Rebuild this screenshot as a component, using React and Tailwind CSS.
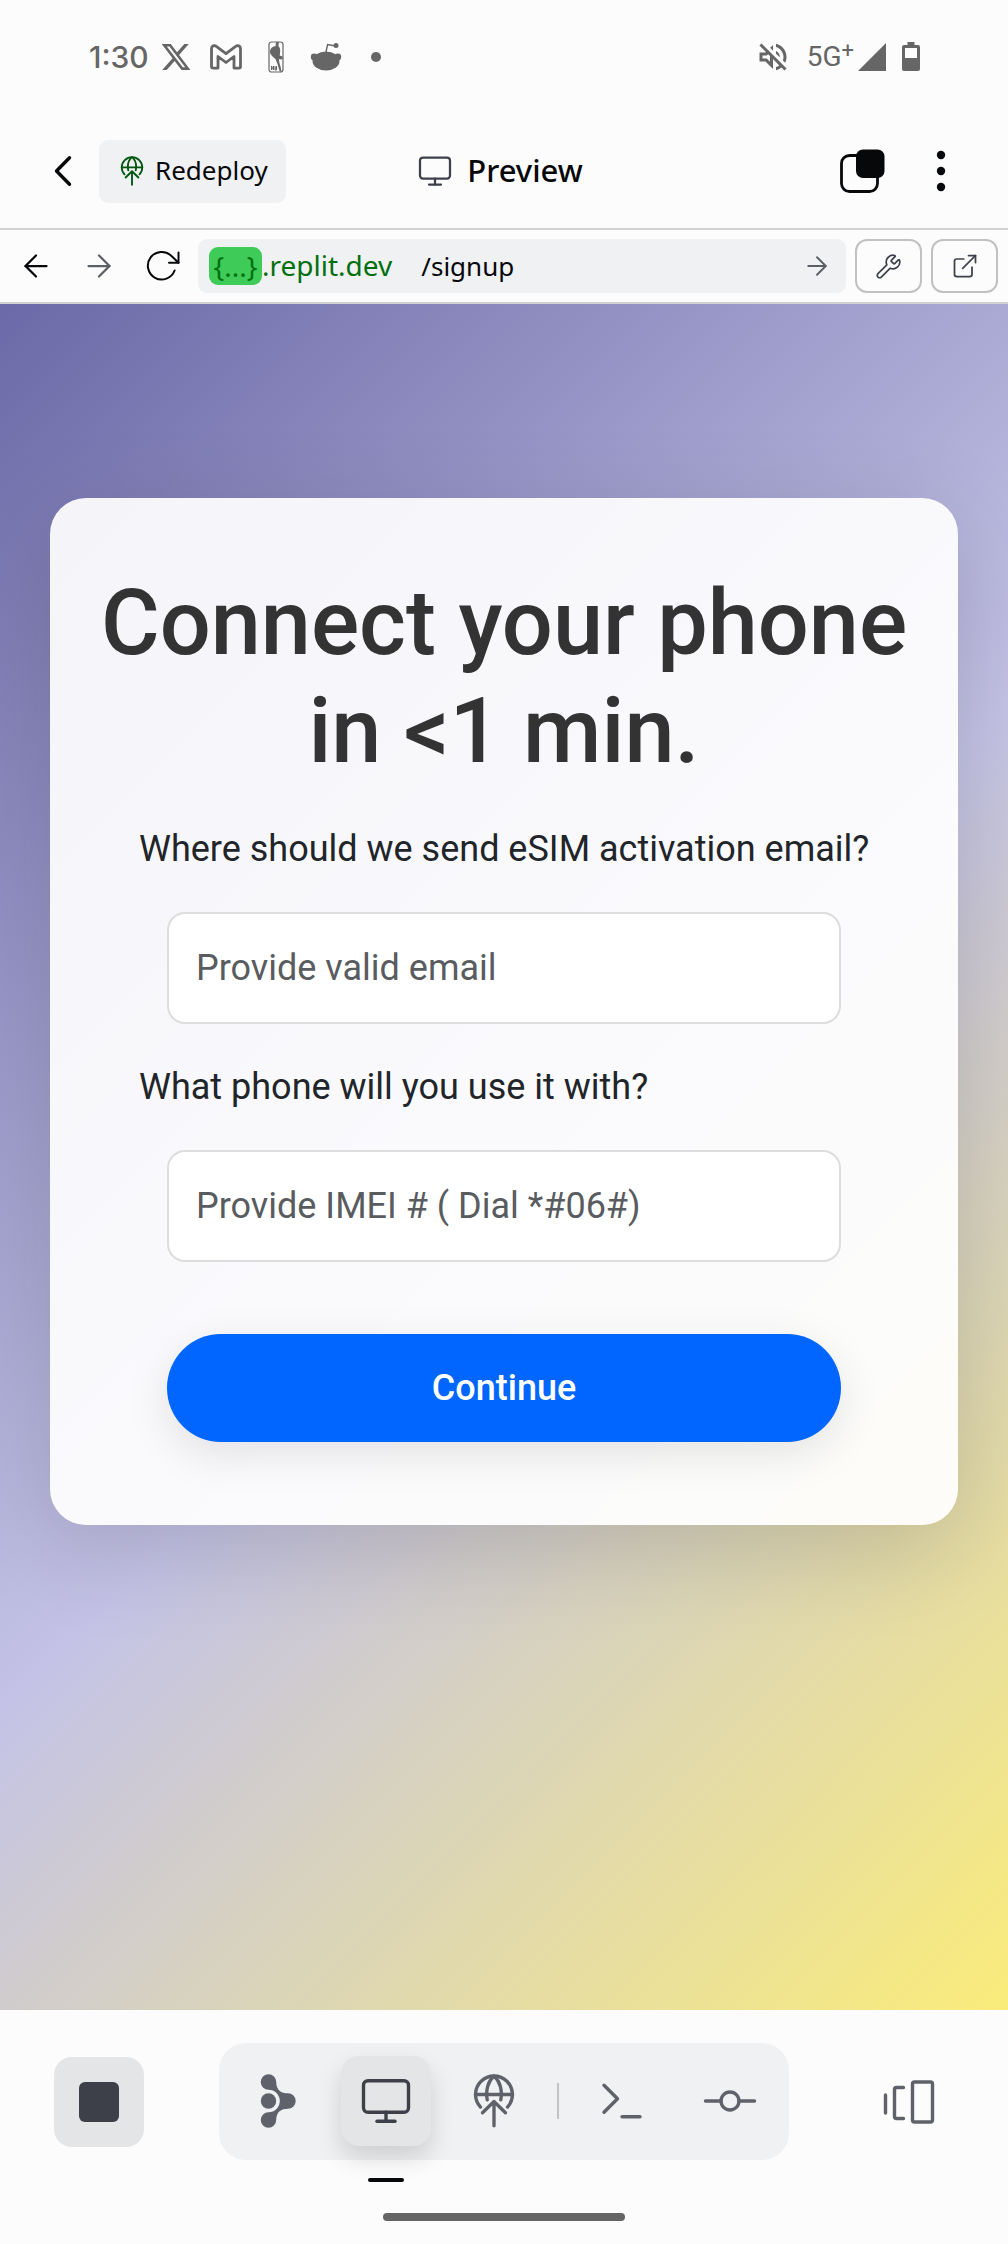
import React from "react";
import {
  ArrowLeft,
  ArrowRight,
  ExternalLink,
  Monitor,
  Terminal,
  Wrench,
} from "lucide-react";
import { FaXTwitter } from "react-icons/fa6";
import { MdOutlineVolumeOff } from "react-icons/md";

function GmailIcon() {
  return (
    <svg width="34" height="28" viewBox="0 0 34 28" fill="none" stroke="currentColor" strokeWidth="2.8" strokeLinejoin="round" aria-hidden="true">
      <path d="M2.500 5.500v18a1.600 1.600 0 0 0 1.600 1.600H9V13.500l8 6 8-6v11.600h4.900a1.600 1.600 0 0 0 1.600-1.600v-18c0-2.600-2.800-3.600-4.800-2.200L17 10.600 7.300 3.300C5.300 1.900 2.500 2.900 2.500 5.500Z" />
    </svg>
  );
}

function PlayerBadgeIcon() {
  return (
    <svg width="16" height="32" viewBox="0 0 16 32" aria-hidden="true">
      <rect x="1" y="1" width="14" height="30" rx="2.500" fill="none" stroke="currentColor" strokeWidth="1.200" />
      <path d="M8 1h3l-.6 4c1.600 1.400 2.100 4 1.700 6.500l-.4 3 2.800 1c.8 1.400 0 3-1.300 3l-2.200-.4c-.2 2 .5 4.500 1.500 7.400l1 5h-1.800l-2-7-2.200-5.500C4.800 15.800 2.500 14 2 11.500 1.800 9 3 7 5 5.800L7.600 5Z" fill="currentColor" />
      <path d="M3.500 25v4M3.500 25l2 4v-4M7 25v4h1.500v-4M7 27h1.500" fill="none" stroke="currentColor" strokeWidth="1" />
    </svg>
  );
}

function RedditIcon() {
  return (
    <svg width="32" height="30" viewBox="0 0 32 30" aria-hidden="true">
      <ellipse cx="16" cy="19" rx="13.500" ry="9.500" fill="currentColor" />
      <circle cx="4.200" cy="15" r="3.400" fill="currentColor" />
      <circle cx="27.800" cy="15" r="3.400" fill="currentColor" />
      <path d="M16 10l1.600-7.500 8 1.500" fill="none" stroke="currentColor" strokeWidth="1.400" />
      <circle cx="26" cy="3.600" r="2.500" fill="currentColor" />
    </svg>
  );
}

function SignalIcon() {
  return (
    <svg width="28" height="28" viewBox="0 0 28 28" aria-hidden="true">
      <path d="M28 0v28H0Z" fill="currentColor" />
    </svg>
  );
}

function BatteryIcon() {
  return (
    <svg width="18" height="30" viewBox="0 0 18 30" aria-hidden="true">
      <path fillRule="evenodd" d="M5.500 0h7v3H16a2 2 0 0 1 2 2v22a2 2 0 0 1-2 2H2a2 2 0 0 1-2-2V5a2 2 0 0 1 2-2h3.500ZM3 6v10h12V6Z" fill="currentColor" />
    </svg>
  );
}

function DeployIcon({ size, strokeWidth = 1.5 }) {
  return (
    <svg width={size} height={size} viewBox="0 0 24 24" fill="none" stroke="currentColor" strokeWidth={strokeWidth} strokeLinecap="round" strokeLinejoin="round" aria-hidden="true">
      <path d="M6 14.700a8.200 8.200 0 1 1 12 0" />
      <path d="M3.800 9.100h16.400" />
      <path d="M12 .9C9.300 3.200 8.200 7.300 9 11.500M12 .9c2.700 2.300 3.800 6.400 3 10.600" />
      <path d="M12 23V12.200M6.900 17.200l5.100-5 5.100 5" />
    </svg>
  );
}

function BackIcon() {
  return (
    <svg width="18" height="32" viewBox="0 0 18 32" fill="none" stroke="currentColor" strokeWidth="3.400" strokeLinecap="round" strokeLinejoin="round" aria-hidden="true">
      <path d="M15.500 2.800 2.500 16l13 13.200" />
    </svg>
  );
}

function ReloadIcon() {
  return (
    <svg width="36" height="36" viewBox="0 0 36 36" fill="none" stroke="currentColor" strokeWidth="2" strokeLinecap="round" strokeLinejoin="round" aria-hidden="true">
      <path d="M30.600 22.500A13.800 13.800 0 1 1 27.500 8l7 6.800" />
      <path d="M34.500 4.500v10.300H25" />
    </svg>
  );
}

function TabsIcon() {
  return (
    <svg width="46" height="46" viewBox="0 0 46 46" aria-hidden="true">
      <rect x="2.500" y="7.500" width="36" height="36" rx="8" fill="none" stroke="currentColor" strokeWidth="2.800" />
      <rect x="17" y="1.500" width="28.500" height="28.500" rx="7" fill="currentColor" />
    </svg>
  );
}

function MoreIcon() {
  return (
    <svg width="10" height="42" viewBox="0 0 10 42" fill="currentColor" aria-hidden="true">
      <circle cx="5" cy="5" r="4.200" />
      <circle cx="5" cy="21" r="4.200" />
      <circle cx="5" cy="37" r="4.200" />
    </svg>
  );
}

function AgentIcon() {
  return (
    <svg width="54" height="54" viewBox="0 0 54 54" fill="currentColor" aria-hidden="true">
      <circle cx="17.500" cy="27" r="7.700" />
      <path d="M17.500.2a7.700 7.700 0 0 1 7.700 7.800C25.400 16.500 30 19.200 37 19.300a7.700 7.700 0 0 1 0 15.400C30 34.800 25.400 37.500 25.200 46a7.700 7.700 0 1 1-7.700-7.700 11.300 11.300 0 0 0 0-22.600A7.700 7.700 0 0 1 17.500.2Z" />
    </svg>
  );
}

function CommitIcon() {
  return (
    <svg width="54" height="54" viewBox="0 0 24 24" fill="none" stroke="currentColor" strokeWidth="1.500" strokeLinecap="round" aria-hidden="true">
      <circle cx="12" cy="12" r="4" />
      <path d="M1.100 12H8M16 12h6.900" />
    </svg>
  );
}

function PanesIcon() {
  return (
    <svg width="54" height="54" viewBox="0 0 54 54" fill="none" stroke="currentColor" strokeWidth="3.400" strokeLinecap="round" strokeLinejoin="round" aria-hidden="true">
      <path d="M3.500 20v18M21.500 12.500h-7a2 2 0 0 0-2 2v27a2 2 0 0 0 2 2h7" />
      <rect x="30.500" y="7" width="20" height="40" rx="2" />
    </svg>
  );
}

function StatusBar() {
  return (
    <div className="flex h-[114px] items-center justify-between pl-[89px] pr-[88px] text-[#666666]">
      <div className="flex items-center">
        <time className="w-[62px] font-['Inter',sans-serif] text-[30px] leading-9 font-medium">1:30</time>
        <ul className="flex items-center">
          <li className="flex w-[50px] justify-center"><FaXTwitter size={32} /></li>
          <li className="flex w-[50px] justify-center"><GmailIcon /></li>
          <li className="flex w-[50px] justify-center"><PlayerBadgeIcon /></li>
          <li className="flex w-[50px] justify-center"><RedditIcon /></li>
          <li className="flex w-[50px] justify-center"><span className="size-[10px] rounded-full bg-[#666666]" /></li>
        </ul>
      </div>
      <div className="flex items-center">
        <MdOutlineVolumeOff size={36} />
        <span className="ml-4 flex items-start font-['Roboto',sans-serif] text-[28px] leading-8">
          5G<span className="text-[22px] leading-5">+</span>
        </span>
        <span className="ml-1"><SignalIcon /></span>
        <span className="ml-4"><BatteryIcon /></span>
      </div>
    </div>
  );
}

function Header() {
  return (
    <header className="grid h-[116px] grid-cols-[1fr_auto_1fr] items-center border-b-2 border-[#d0d2d4] pl-[54px] pr-[62px] text-[#07080a]">
      <div className="flex items-center gap-[27px]">
        <button type="button" aria-label="Back"><BackIcon /></button>
        <button type="button" className="flex h-[63px] items-center gap-2 rounded-[9px] bg-[#f0f1f3] px-[18px] text-[26px] leading-8">
          <span className="text-[#00570f]"><DeployIcon size={30} /></span>
          <span className="pb-[2px]">Redeploy</span>
        </button>
      </div>
      <h1 className="flex items-center gap-[14px] text-[31px] leading-9 font-medium">
        <Monitor size={36} strokeWidth={1.5} className="text-[#3d4049]" />
        <span className="pb-[2px]">Preview</span>
      </h1>
      <div className="flex items-center justify-end gap-[51px]">
        <button type="button" aria-label="Tabs"><TabsIcon /></button>
        <button type="button" aria-label="More options"><MoreIcon /></button>
      </div>
    </header>
  );
}

function AddressBar() {
  return (
    <div className="flex h-[74px] items-center border-b-2 border-[#d0d2d4] pl-[18px] pr-[10px] text-[#07080a]">
      <div className="flex items-center gap-[27px]">
        <button type="button" aria-label="Go back"><ArrowLeft size={36} strokeWidth={1.5} /></button>
        <button type="button" aria-label="Go forward" className="text-[#5c5f66]"><ArrowRight size={36} strokeWidth={1.5} /></button>
        <button type="button" aria-label="Reload"><ReloadIcon /></button>
      </div>
      <form className="ml-[18px] flex h-[54px] min-w-0 flex-1 items-center rounded-[9px] bg-[#f0f1f3] pl-[11px] pr-[14px]" onSubmit={(e) => e.preventDefault()}>
        <span className="flex shrink-0 items-center text-[28px] leading-[38px] text-[#00700f]">
          <span className="flex h-[38px] w-[53px] items-center justify-center rounded-[9px] bg-[#3ecb57]">{"{...}"}</span>
          <span className="pb-[2px]">.replit.dev</span>
        </span>
        <input aria-label="Path" defaultValue="/signup" className="ml-[29px] min-w-0 flex-1 bg-transparent text-[26px] leading-9 outline-none" />
        <button type="submit" aria-label="Go" className="text-[#5c5f66]"><ArrowRight size={30} strokeWidth={1.5} /></button>
      </form>
      <button type="button" aria-label="Developer tools" className="ml-[9px] flex h-[54px] w-[67px] items-center justify-center rounded-[12px] border-2 border-[#c0c2c2] text-[#3d4049]">
        <Wrench size={27} strokeWidth={1.5} />
      </button>
      <button type="button" aria-label="Open in new tab" className="ml-[9px] flex h-[54px] w-[67px] items-center justify-center rounded-[12px] border-2 border-[#c0c2c2] text-[#3d4049]">
        <ExternalLink size={28} strokeWidth={1.5} />
      </button>
    </div>
  );
}

function Field({ id, label, placeholder, type = "text" }) {
  return (
    <div className="flex flex-col gap-9">
      <label htmlFor={id} className="text-[36px] leading-[54px] whitespace-nowrap text-[#212529]">{label}</label>
      <div className="px-7">
        <input id={id} type={type} placeholder={placeholder} className="block h-[112px] w-full rounded-[18px] border-2 border-[#dddddd] bg-white px-[27px] text-[36px] leading-[54px] text-[#212529] outline-none placeholder:text-[#595c5f]" />
      </div>
    </div>
  );
}

function SignupPage() {
  return (
    <main className="min-h-[1706px] bg-[linear-gradient(135deg,#6b69a7_0%,#c4c3e6_52%,#faec7a_100%)] px-[50px] pt-[194px] pb-[120px] font-['Roboto',sans-serif]">
      <section className="rounded-[36px] bg-white/92 px-9 pt-[72px] pb-[83px] shadow-[0_24px_96px_rgba(0,0,0,0.15)]">
        <h2 className="text-center text-[90px] leading-[108px] font-medium text-[#333333]">
          Connect your phone<br />in &lt;1 min.
        </h2>
        <form className="mt-9 flex flex-col gap-9 px-[53px]" onSubmit={(e) => e.preventDefault()}>
          <Field id="email" type="email" label="Where should we send eSIM activation email?" placeholder="Provide valid email" />
          <Field id="imei" label="What phone will you use it with?" placeholder="Provide IMEI # ( Dial *#06#)" />
          <div className="mt-9 px-7">
            <button type="submit" className="h-[108px] w-full rounded-full bg-[#0066ff] text-[36px] leading-[54px] font-medium text-white shadow-[0_12px_45px_rgba(0,0,0,0.1)]">
              Continue
            </button>
          </div>
        </form>
      </section>
    </main>
  );
}

function DockButton({ label, active = false, children }) {
  return (
    <button
      type="button"
      aria-label={label}
      aria-pressed={active}
      className={
        active
          ? "relative flex size-[90px] items-center justify-center rounded-[18px] bg-[#e4e5e7] text-[#3d4049] shadow-[0_12px_24px_rgba(0,0,0,0.14)]"
          : "flex size-[90px] items-center justify-center rounded-[18px]"
      }
    >
      {children}
      {active && <span className="absolute top-[122px] h-1 w-9 rounded-full bg-[#07080a]" />}
    </button>
  );
}

function Dock() {
  return (
    <footer className="flex flex-col items-center pt-[33px] pb-[23px] text-[#5f626a]">
      <div className="flex w-full items-center justify-between px-[54px]">
        <button type="button" aria-label="Stop" className="flex size-[90px] items-center justify-center rounded-[18px] bg-[#e4e5e7]">
          <span className="size-10 rounded-[6px] bg-[#3d4049]" />
        </button>
        <nav aria-label="Tools" className="flex items-center gap-[18px] rounded-[27px] bg-[#f0f1f3] px-[14px] pt-[13px] pb-[14px]">
          <DockButton label="Agent"><AgentIcon /></DockButton>
          <DockButton label="Preview" active><Monitor size={54} strokeWidth={1.5} /></DockButton>
          <DockButton label="Deploy"><DeployIcon size={54} /></DockButton>
          <span className="h-9 w-[2px] bg-[#c0c2c4]" />
          <DockButton label="Shell"><Terminal size={54} strokeWidth={1.5} /></DockButton>
          <DockButton label="Git"><CommitIcon /></DockButton>
        </nav>
        <DockButton label="Switch tabs"><PanesIcon /></DockButton>
      </div>
      <span className="mt-[53px] h-2 w-[242px] rounded-full bg-[#666666]" />
    </footer>
  );
}

export default function App() {
  return (
    <div className="min-h-screen bg-[#fcfcfc] font-['Noto_Sans',sans-serif]">
      <StatusBar />
      <Header />
      <AddressBar />
      <SignupPage />
      <Dock />
    </div>
  );
}
